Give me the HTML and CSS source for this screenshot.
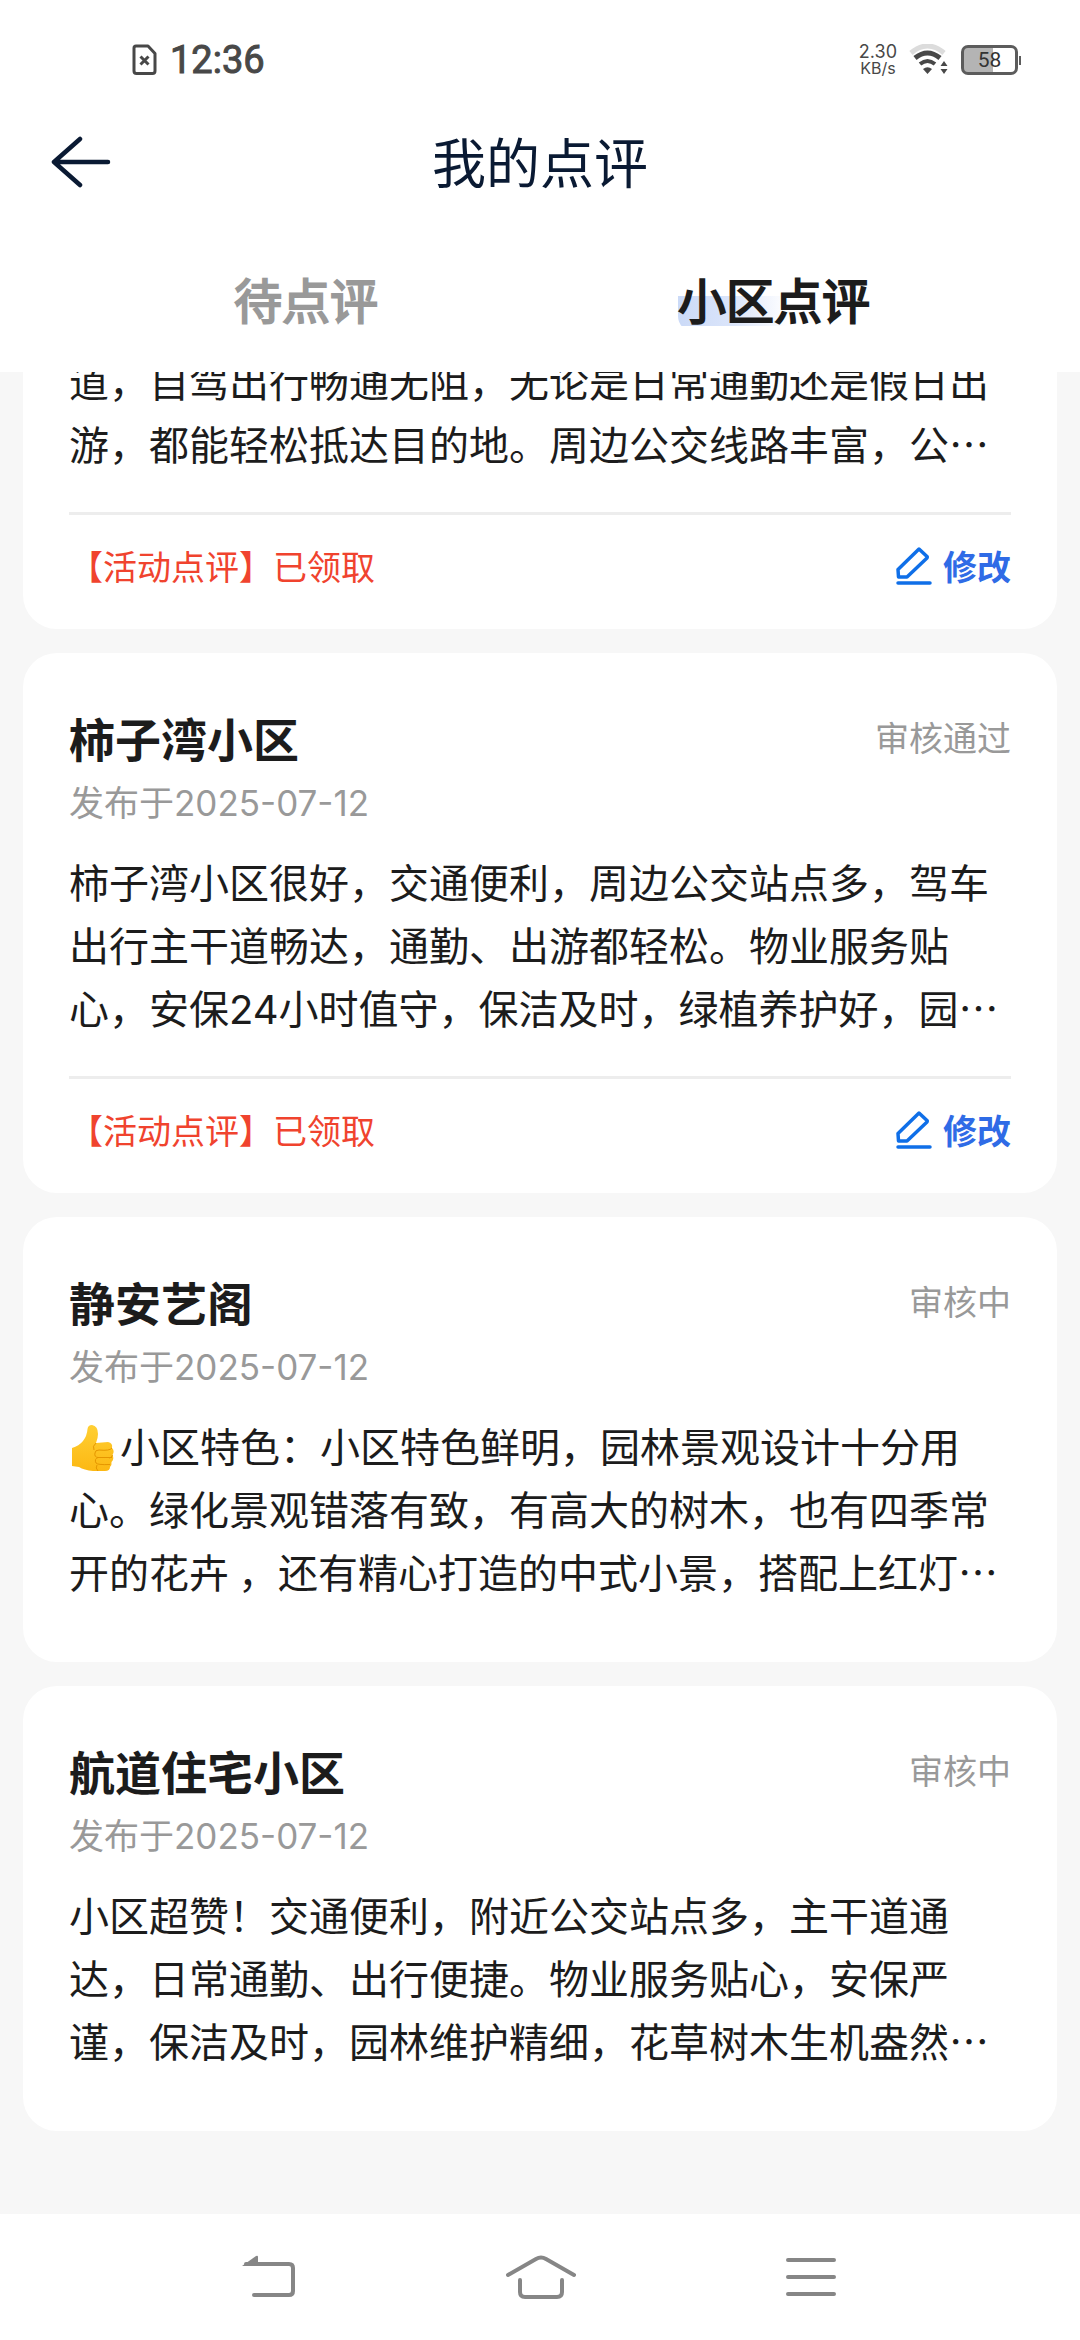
FILE: index.html
```html
<!DOCTYPE html>
<html lang="zh-CN">
<head>
  <meta charset="utf-8">
  <meta name="viewport" content="width=device-width, initial-scale=1">
  <title>我的点评</title>
  <link rel="stylesheet" href="styles.css">
</head>
<body>
  <svg class="sprite" aria-hidden="true">
    <symbol id="icon-edit" viewBox="0 0 36 38">
      <path d="M23 2 L31 9.500 Q31.500 10 31 11 L11 30 H2.500 L2 22.500 Z" fill="none" stroke="currentColor" stroke-width="3.500" stroke-linejoin="round"/>
      <path d="M2 36 H34" fill="none" stroke="currentColor" stroke-width="3.500" stroke-linecap="round"/>
    </symbol>
  </svg>

  <div class="status-bar">
    <div class="status-group">
      <svg class="icon-sim" viewBox="0 0 26 32" fill="none" stroke="currentColor" stroke-width="3">
        <path d="M4 2 H16 L23 9.500 V27 Q23 29.500 20.500 29.500 H4.500 Q2 29.500 2 27 V4 Q2 2 4 2 Z" stroke-linejoin="round"/>
        <path d="M8.500 12.500 L16.500 20.500 M16.500 12.500 L8.500 20.500"/>
      </svg>
      <time class="clock">12:36</time>
    </div>
    <div class="status-group">
      <div class="net-speed"><span class="net-value">2.30</span><span class="net-unit">KB/s</span></div>
      <svg class="icon-wifi" viewBox="0 0 40 32">
        <path d="M2 9 Q18.500 -5 35 9" fill="none" stroke="#dcdcdc" stroke-width="5"/>
        <path d="M6 14 Q18.500 4 31 14" fill="none" stroke="currentColor" stroke-width="5"/>
        <path d="M11 20 Q18.500 14 26 20" fill="none" stroke="currentColor" stroke-width="4"/>
        <path d="M14 25 Q18.500 21.500 23 25 L18.500 30 Z" fill="currentColor"/>
        <path d="M31.500 22 L35 17 L38.500 22 Z M31.500 25 L35 30 L38.500 25 Z" fill="currentColor"/>
      </svg>
      <div class="battery"><span>58</span></div>
    </div>
  </div>

  <header class="app-bar">
    <button class="back" type="button" aria-label="返回">
      <svg viewBox="0 0 60 52" fill="none" stroke="currentColor" stroke-width="4.500" stroke-linecap="round" stroke-linejoin="round">
        <path d="M57 26 H3 M29 3 L3 26 L29 49"/>
      </svg>
    </button>
    <h1>我的点评</h1>
  </header>

  <nav class="tabs">
    <a class="tab" href="#pending">待点评</a>
    <a class="tab tab-active" href="#community" aria-current="page"><span>小区点评</span></a>
  </nav>

  <main class="reviews">
    <article class="card card-scrolled">
      <p class="text">道，自驾出行畅通无阻，无论是日常通勤还是假日出游，都能轻松抵达目的地。周边公交线路丰富，公…</p>
      <footer class="card-foot">
        <span class="reward">【活动点评】已领取</span>
        <button class="edit" type="button"><svg aria-hidden="true"><use href="#icon-edit"/></svg>修改</button>
      </footer>
    </article>

    <article class="card">
      <div class="card-head">
        <h2>柿子湾小区</h2>
        <span class="state">审核通过</span>
      </div>
      <p class="date">发布于<time class="num">2025-07-12</time></p>
      <p class="text">柿子湾小区很好，交通便利，周边公交站点多，驾车出行主干道畅达，通勤、出游都轻松。物业服务贴心，安保<span class="num">24</span>小时值守，保洁及时，绿植养护好，园…</p>
      <footer class="card-foot">
        <span class="reward">【活动点评】已领取</span>
        <button class="edit" type="button"><svg aria-hidden="true"><use href="#icon-edit"/></svg>修改</button>
      </footer>
    </article>

    <article class="card">
      <div class="card-head">
        <h2>静安艺阁</h2>
        <span class="state">审核中</span>
      </div>
      <p class="date">发布于<time class="num">2025-07-12</time></p>
      <p class="text"><svg class="thumb" viewBox="0 0 48 48" role="img" aria-label="赞">
          <defs>
            <linearGradient id="thumb-skin" x1="0" y1="0" x2="0" y2="1">
              <stop offset="0" stop-color="#ffcf33"/>
              <stop offset="1" stop-color="#fcb813"/>
            </linearGradient>
          </defs>
          <path d="M3 24 Q10 22 14 17 Q18 12 18.500 5 Q19 1 23 1 Q29 2 29 10 Q29 14 27 19 L39 18 Q44 19 43 24 Q46 27 43.500 31 Q45.500 35 42.500 38 Q43 41 41 43 Q41 47 36 47 H24 Q15 46 10 43 L3 42 Z" fill="url(#thumb-skin)"/>
          <path d="M27 19 Q23 22 25 26 M43 24 Q41 27 30 26 Q26 26 26 29 Q25 33 29 33.500 H43 M43.500 31 Q43 34 40 34 M29 33.500 Q25 35 27 39 Q28 41 41 40.500 M28 41 Q26 44 29 47" fill="none" stroke="#e59600" stroke-width="1"/>
        </svg>小区特色：小区特色鲜明，园林景观设计十分用心。绿化景观错落有致，有高大的树木，也有四季常开的花卉 ，还有精心打造的中式小景，搭配上红灯…</p>
    </article>

    <article class="card">
      <div class="card-head">
        <h2>航道住宅小区</h2>
        <span class="state">审核中</span>
      </div>
      <p class="date">发布于<time class="num">2025-07-12</time></p>
      <p class="text">小区超赞！交通便利，附近公交站点多，主干道通达，日常通勤、出行便捷。物业服务贴心，安保严谨，保洁及时，园林维护精细，花草树木生机盎然…</p>
    </article>
  </main>

  <div class="system-nav">
    <button type="button" aria-label="返回">
      <svg viewBox="0 0 72 44" fill="none" stroke="currentColor" stroke-width="4" stroke-linecap="round">
        <path d="M12 9 H55 Q59 9 59 13 V36 Q59 40 55 40 H20"/>
        <path d="M8 11 L22 1 Q24 0 24 2 V11 Z" fill="currentColor" stroke="none"/>
      </svg>
    </button>
    <button type="button" aria-label="主页">
      <svg viewBox="0 0 72 44" fill="none" stroke="currentColor" stroke-width="4" stroke-linecap="round" stroke-linejoin="round">
        <path d="M4 20 L32 4 Q37 1 42 4 L70 20 M16 25 V37 Q16 42 21 42 H53 Q58 42 58 37 V25"/>
      </svg>
    </button>
    <button type="button" aria-label="最近任务">
      <svg viewBox="0 0 72 44" fill="none" stroke="currentColor" stroke-width="4" stroke-linecap="round">
        <path d="M14 5 H60 M14 22 H60 M14 39 H60"/>
      </svg>
    </button>
  </div>
</body>
</html>
```
FILE: styles.css
```css
* {
  box-sizing: border-box;
}

body {
  margin: 0;
  min-height: 100vh;
  display: flex;
  flex-direction: column;
  background: #f7f7f7;
  color: #1c1c1c;
  font-family: "Noto Sans CJK SC", "Noto Sans", sans-serif;
  text-spacing-trim: space-all;
}

h1,
h2,
p {
  margin: 0;
}

button {
  padding: 0;
  border: 0;
  background: none;
  color: inherit;
  font: inherit;
}

svg {
  display: block;
}

.sprite {
  position: absolute;
  width: 0;
  height: 0;
}

.num {
  font-family: Inter, "Noto Sans CJK SC", sans-serif;
  line-height: 1;
}

/* Status bar */

.status-bar {
  display: flex;
  justify-content: space-between;
  align-items: center;
  height: 120px;
  padding: 0 62px 0 132px;
  background: #fff;
  color: #484848;
  font-family: Roboto, sans-serif;
}

.status-group {
  display: flex;
  align-items: center;
  gap: 12px;
}

.icon-sim {
  width: 26px;
  height: 32px;
}

.clock {
  font-size: 38px;
  font-weight: 400;
  line-height: 40px;
  -webkit-text-stroke: 1px currentColor;
}

.net-speed {
  display: flex;
  flex-direction: column;
  align-items: center;
  font-family: Inter, sans-serif;
  line-height: 17px;
}

.net-value {
  font-size: 18px;
}

.net-unit {
  font-size: 16px;
}

.icon-wifi {
  width: 40px;
  height: 32px;
}

.battery {
  position: relative;
  width: 57px;
  height: 30px;
  border: 3px solid #5c5c5c;
  border-radius: 7px;
  background: linear-gradient(90deg, #b4b4b4 56%, #fff 56%);
  font-size: 21px;
  line-height: 24px;
  text-align: center;
  color: #333;
}

.battery::after {
  content: "";
  position: absolute;
  top: 8px;
  right: -6px;
  width: 2px;
  height: 9px;
  background: #5c5c5c;
}

/* Title bar */

.app-bar {
  display: grid;
  grid-template-columns: 60px 1fr 60px;
  align-items: center;
  height: 84px;
  padding: 0 51px;
  background: #fff;
  color: #0a1a33;
}

.back svg {
  width: 60px;
  height: 52px;
}

h1 {
  padding-bottom: 2px;
  font-size: 54px;
  font-weight: 400;
  line-height: 80px;
  text-align: center;
}

/* Tabs */

.tabs {
  display: grid;
  grid-template-columns: 1fr 1fr;
  padding: 60px 72px 40px;
  background: #fff;
  font-size: 48px;
  line-height: 68px;
  text-align: center;
}

.tab {
  color: #999;
  text-decoration: none;
  -webkit-text-stroke: 2px currentColor;
}

.tab-active {
  color: #1c1c1c;
}

.tab-active span {
  display: inline-block;
  background: linear-gradient(90deg, #cbdaf7, #dbe5fa 50%, #fff) 0 32px / 110px 30px no-repeat;
  border-bottom-left-radius: 16px;
}

/* Review list */

.reviews {
  flex: 1;
  display: flex;
  flex-direction: column;
  gap: 24px;
  padding: 0 23px 60px;
  overflow: hidden;
}

.card {
  padding: 53px 46px 39px;
  border-radius: 34px;
  background: #fff;
}

/* First card is partly scrolled under the tabs */
.card-scrolled {
  margin-top: -23px;
  padding-top: 0;
  border-top-left-radius: 0;
  border-top-right-radius: 0;
}

.card-head {
  display: flex;
  justify-content: space-between;
  align-items: center;
}

h2 {
  font-size: 46px;
  font-weight: 700;
  line-height: 62px;
}

.state {
  color: #999;
  font-size: 34px;
  line-height: 48px;
}

.date {
  margin-top: 9px;
  color: #999;
  font-size: 35px;
  line-height: 48px;
}

.text {
  margin: 25px 0 20px;
  font-size: 40px;
  line-height: 63px;
}

.card-scrolled .text {
  margin-top: 0;
}

.thumb {
  display: inline-block;
  width: 48px;
  height: 48px;
  margin-right: 3px;
  vertical-align: -10px;
}

.card-foot {
  display: flex;
  justify-content: space-between;
  align-items: center;
  margin-top: 37px;
  padding-top: 27px;
  border-top: 3px solid #ededed;
  font-size: 34px;
  line-height: 48px;
}

.reward {
  color: #f0432e;
}

.edit {
  display: flex;
  align-items: center;
  gap: 11px;
  color: #2f6be6;
  font-weight: 700;
}

.edit svg {
  width: 36px;
  height: 38px;
  color: #0f6fe8;
}

/* System navigation */

.system-nav {
  display: grid;
  grid-template-columns: repeat(3, 1fr);
  align-items: center;
  justify-items: center;
  height: 126px;
  padding: 0 12.5%;
  background: #fff;
  color: #868686;
}

.system-nav svg {
  width: 72px;
  height: 44px;
}
```
